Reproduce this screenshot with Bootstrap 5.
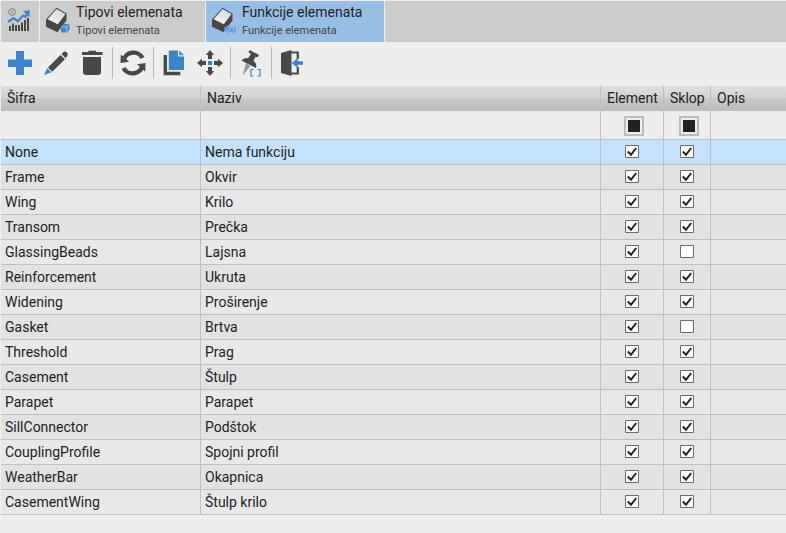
<!DOCTYPE html>
<html lang="hr">
<head>
<meta charset="utf-8">
<title>Funkcije elemenata</title>
<link rel="stylesheet" href="https://cdn.jsdelivr.net/npm/bootstrap@5.3.0/dist/css/bootstrap.min.css">
<style>
body{background:#eee;color:#222;font:14px/18px Roboto,sans-serif;overflow:hidden;height:533px}
svg{display:block}
.tabs-bar{height:42px;padding:1px 0 0 1px;gap:1px}
.tab-item{background:#ccc;height:41px}
.tab-item.current{background:#99bee5}
.tab-start{width:38px;padding:7px 0 0 6px}
.tab-a{width:165px}.tab-b{width:178px}
.tab-icon{padding:6px 0 0 5px;width:36px}
.tab-title{line-height:16px;padding-top:3px;white-space:nowrap}
.tab-sub{font-size:11px;line-height:13px;color:#444;margin-top:4px}
.tools{height:44px;padding:7px 0 0 7px}
.tool{width:26px;height:28px;margin-right:10px}
.rule-v{width:1px;height:32px;background:#b0b8c1;margin-right:7px;margin-left:-3px;margin-top:-2px}
.grid-table{width:785px;margin:0 0 0 1px;table-layout:fixed;border-collapse:separate;border-spacing:0}
.grid-table th,.grid-table td{border:solid #c0c0c0;border-width:0 1px 1px 0;padding:0 0 0 4px;height:25px;line-height:24px;white-space:nowrap;overflow:hidden}
.grid-table th:last-child,.grid-table td:last-child{border-right:0}
.grid-table th{font-weight:400;padding-left:6px;background:linear-gradient(#dfdfdf,#d2d2d2 48%,#c9c9c9 50%,#bcbcbc)}
.filters td{height:29px}
.data-row td{background:#e8e8e8}
.data-row:nth-child(odd) td{background:#e2e2e2}
.data-row:nth-child(2) td{background:#c4e1ff}
.grid-table td.check-cell{padding:0}
.tick-box{width:14px;height:13px;margin:-1px auto 0}
.mixed-box{width:20px;height:20px;border:2px solid #bbb;background:#222;box-shadow:inset 0 0 0 2px #eee;margin:1px auto 0;position:relative;left:2px}
</style>
<script src="https://cdn.jsdelivr.net/npm/bootstrap@5.3.0/dist/js/bootstrap.bundle.min.js"></script>
</head>
<body>
<svg width="0" height="0" class="position-absolute">
<symbol id="yes" viewBox="0 0 14 13"><path d="M.5.5h13v12H.5z" fill="#fff" stroke="#6b6b6b"/><path d="m2.800 6.500 3.200 3.300L11.200 3" fill="none" stroke="#222" stroke-width="2"/></symbol>
<symbol id="no" viewBox="0 0 14 13"><path d="M.5.5h13v12H.5z" fill="#fff" stroke="#6b6b6b"/></symbol>
<symbol id="box" viewBox="0 0 24 28"><path d="M11.500.8 21.500 6.500v7L12.500 25.200 1 19.800v-7.200z" fill="#484848"/><path d="M11.500 2 20.500 7 12.800 17.200 2.600 12.300z" fill="url(#lid)"/></symbol>
<linearGradient id="lid" x1="0" y1="1" x2=".6" y2="0"><stop stop-color="#f4f4f4"/><stop offset="1" stop-color="#f0f0f0" stop-opacity=".88"/></linearGradient>
</svg>

<nav class="tabs-bar d-flex">
  <div class="tab-item tab-start"><svg width="26" height="26" viewBox="0 0 26 26">
    <circle cx="5" cy="4" r="3.300" fill="none" stroke="#999" stroke-width="1.300"/><path d="M6.800 3H4.500v2.200h2.300" fill="none" stroke="#999"/>
    <path d="M3 18v5M6 15.500V23M9 17v6M12 17v6M15 14.500V23M18 12v11M21 10v13" stroke="#484848" stroke-width="2"/>
    <path d="m1 14 5.500-4 4.500 3.200L16 7.300l2.500 1.500 2.500-4" fill="none" stroke="#3b87cf" stroke-width="2.200"/><path d="m16 3 7-.8-.8 7z" fill="#3b87cf"/></svg></div>
  <div class="tab-item tab-a d-flex"><div class="tab-icon"><svg width="26" height="28" viewBox="0 0 26 28"><use href="#box" width="24" height="28"/>
    <path d="m16 19.500 3-2.500h5.500v5.500L22 25.500h-6z" fill="#3b87cf"/><path d="M16 19.800h5.700v5.700M21.700 19.800l2.800-2.800" stroke="#b9cee1" stroke-width=".8" fill="none"/></svg></div>
    <div><div class="tab-title">Tipovi elemenata</div><div class="tab-sub">Tipovi elemenata</div></div></div>
  <div class="tab-item current tab-b d-flex"><div class="tab-icon"><svg width="28" height="28" viewBox="0 0 28 28"><use href="#box" width="24" height="28"/>
    <text x="14" y="25" font-size="7" font-style="italic" font-weight="500" fill="#2f7fcc" stroke="#99bee5" stroke-width="1.500" paint-order="stroke">f(x)</text></svg></div>
    <div><div class="tab-title">Funkcije elemenata</div><div class="tab-sub">Funkcije elemenata</div></div></div>
  <div class="tab-item flex-grow-1"></div>
</nav>

<div class="tools d-flex">
  <svg class="tool" viewBox="0 0 26 28"><path d="M9 2h8v8.500h8v7.500h-8v8H9v-8H1v-7.500h8z" fill="#3b84cc"/></svg>
  <svg class="tool" viewBox="0 0 26 28"><path d="m5 18.500 12.500-12.500 4.300 4.200-12.500 12.500z" fill="#484848"/><path d="m18.500 5 2-2q1.500-1.300 3.300.3 1.800 1.900.5 3.500l-1.600 2.400z" fill="#484848"/><path d="m4.200 19.300 4.300 4L1 26z" fill="#3b84cc"/></svg>
  <svg class="tool" viewBox="0 0 26 28"><path d="M3 5V3h6.500V1.700h7.500V3h6.500v3H3zM4 8h18v15q0 3-3 3H7q-3 0-3-3z" fill="#484848"/></svg>
  <div class="rule-v"></div>
  <svg class="tool" viewBox="0 0 26 28"><path d="M3.500 12.500A10 9.500 0 0 1 22.500 9M22.500 15.500A10 9.500 0 0 1 3.500 19" fill="none" stroke="#484848" stroke-width="4.400"/><path d="M.8 5.500.5 14l8.500-1.200zM25.200 22.500l.3-8.500-8.500 1.200z" fill="#484848"/></svg>
  <div class="rule-v"></div>
  <svg class="tool" viewBox="0 0 26 28"><path d="M4.300 6v18.500h15" fill="none" stroke="#484848" stroke-width="3.400"/><path d="M7.800 1.500H17v6h6V21H7.800z" fill="#3b84cc"/><path d="M18.200 1.500 23 6.300h-4.800z" fill="#3b84cc"/></svg>
  <svg class="tool" viewBox="0 0 26 28"><path d="m13 1 4.200 5H15v4h-4V6H8.800zM13 27l4.200-5H15v-4h-4v4H8.800zM0 14l5-4.200V12h4v4H5v2.200zM26 14l-5-4.200V12h-4v4h4v2.200z" fill="#484848"/><path d="M11 12h4v4h-4z" fill="#3b84cc"/></svg>
  <div class="rule-v"></div>
  <svg class="tool" viewBox="0 0 26 28"><path d="m8 14 4.500 3L4.500 26.500z" fill="#999"/><path d="m11.500 1 9.500 5-1.400 2.500-2-.7L15.500 12q4 2.800 2.400 7L3.500 11.500q2.800-3.500 6.500-2.200L13 5l-2.500-1.800z" fill="#484848"/><path d="M15.500 20.500H13v6.500h2.500M19.500 20.500H22v6.500h-2.500" fill="none" stroke="#3b84cc" stroke-width="1.200"/></svg>
  <div class="rule-v"></div>
  <svg class="tool" viewBox="0 0 26 28"><path d="M2 4 12.500 1v26L2 24z" fill="#484848"/><path d="M12 3.500h6.800V10M12 24.500h6.800V18" fill="none" stroke="#484848" stroke-width="2.200"/><path d="m12.700 14 6-5v3.200H24v3.600h-5.300V19z" fill="#3b84cc"/></svg>
</div>

<table class="grid-table">
  <colgroup><col style="width:200px"><col style="width:400px"><col style="width:63px"><col style="width:47px"><col style="width:75px"></colgroup>
  <thead><tr><th>Šifra</th><th>Naziv</th><th>Element</th><th>Sklop</th><th>Opis</th></tr></thead>
  <tbody id="rows"><tr class="filters"><td></td><td></td><td class="check-cell"><div class="mixed-box"></div></td><td class="check-cell"><div class="mixed-box"></div></td><td></td></tr></tbody>
</table>
<script>
const items = [["None","Nema funkciju",1],["Frame","Okvir",1],["Wing","Krilo",1],["Transom","Prečka",1],["GlassingBeads","Lajsna",0],["Reinforcement","Ukruta",1],["Widening","Proširenje",1],["Gasket","Brtva",0],["Threshold","Prag",1],["Casement","Štulp",1],["Parapet","Parapet",1],["SillConnector","Podštok",1],["CouplingProfile","Spojni profil",1],["WeatherBar","Okapnica",1],["CasementWing","Štulp krilo",1]];
const box = on => `<td class="check-cell"><svg class="tick-box"><use href="#${on ? "yes" : "no"}"/></svg></td>`;
document.getElementById("rows").insertAdjacentHTML("beforeend", items.map(([code, name, on]) =>
  `<tr class="data-row"><td>${code}</td><td>${name}</td>${box(1)}${box(on)}<td></td></tr>`).join(""));
</script>
</body>
</html>
